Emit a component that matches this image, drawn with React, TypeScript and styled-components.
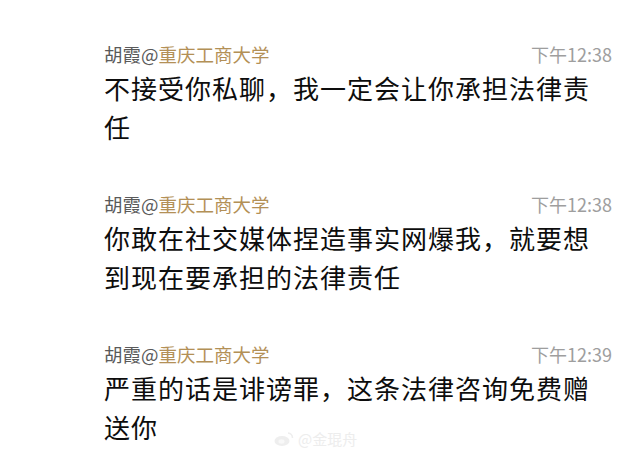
import React from 'react';
import styled, { createGlobalStyle } from 'styled-components';

const GlobalStyle = createGlobalStyle`
  html, body {
    margin: 0;
    padding: 0;
    background: #ffffff;
  }
  body {
    font-family: "Noto Sans CJK SC", "Noto Sans", sans-serif;
  }
`;

const Page = styled.div`
  position: relative;
  width: 640px;
  height: 456px;
  overflow: hidden;
  box-sizing: border-box;
  padding: 42px 28px 0 104px;
  display: flex;
  flex-direction: column;
  gap: 46px;
`;

const Block = styled.div`
  display: flex;
  flex-direction: column;
  gap: 2px;
`;

const Header = styled.div`
  display: flex;
  justify-content: space-between;
  align-items: center;
  height: 24px;
  line-height: 24px;
`;

const Name = styled.span`
  font-size: 18.5px;
  color: #5a5a5a;
`;

const School = styled.span`
  color: #b39056;
`;

const Time = styled.span`
  font-size: 18px;
  color: #9e9e9e;
`;

const Text = styled.div`
  max-width: 500px;
  font-size: 26px;
  letter-spacing: 1px;
  line-height: 39px;
  color: #0d0d0d;
`;

// faint weibo watermark sitting over the last message
const Watermark = styled.div`
  position: absolute;
  left: 274px;
  top: 428px;
  display: flex;
  align-items: center;
  gap: 4px;
  font-size: 15px;
  color: #ededed;
  pointer-events: none;
`;

type Message = {
  time: string;
  text: string;
};

const messages: Message[] = [
  { time: '下午12:38', text: '不接受你私聊，我一定会让你承担法律责任' },
  { time: '下午12:38', text: '你敢在社交媒体捏造事实网爆我，就要想到现在要承担的法律责任' },
  { time: '下午12:39', text: '严重的话是诽谤罪，这条法律咨询免费赠送你' },
];

const WeiboMark = () => (
  <svg width="20" height="16" viewBox="0 0 20 16">
    <ellipse cx="8" cy="10" rx="7.5" ry="5" fill="#eeeeee" />
    <ellipse cx="7.5" cy="10.5" rx="3" ry="2.2" fill="#f8f8f8" />
    <path d="M14 2 a5 5 0 0 1 4.5 5" stroke="#eeeeee" strokeWidth="1.6" fill="none" />
  </svg>
);

export default function App() {
  return (
    <>
      <GlobalStyle />
      <Page>
        {messages.map((m, i) => (
          <Block key={i}>
            <Header>
              <Name>
                胡霞@<School>重庆工商大学</School>
              </Name>
              <Time>{m.time}</Time>
            </Header>
            <Text>{m.text}</Text>
          </Block>
        ))}
        <Watermark>
          <WeiboMark />
          <span>@金琨舟</span>
        </Watermark>
      </Page>
    </>
  );
}
